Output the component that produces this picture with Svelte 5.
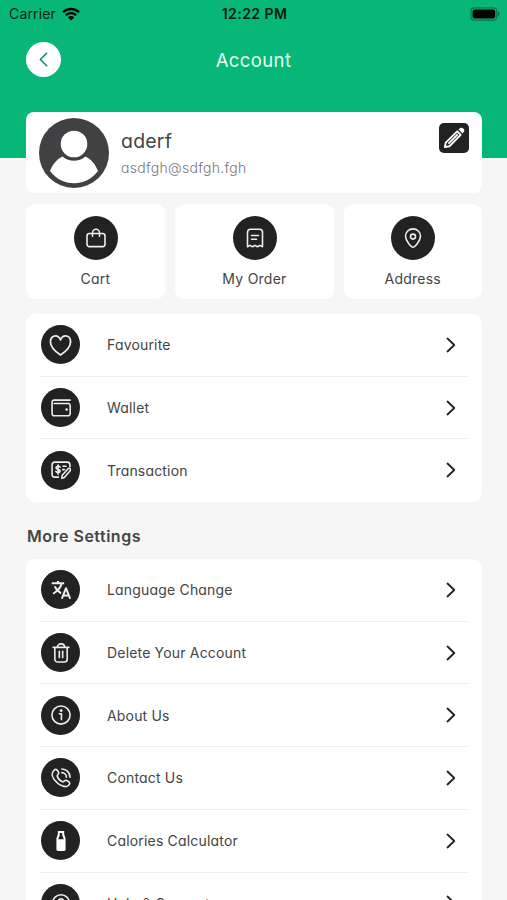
<script lang="ts">
	interface Item {
		icon: string;
		label: string;
	}

	const shortcuts: Item[] = [
		{ icon: 'bag', label: 'Cart' },
		{ icon: 'receipt', label: 'My Order' },
		{ icon: 'pin', label: 'Address' }
	];

	const general: Item[] = [
		{ icon: 'heart', label: 'Favourite' },
		{ icon: 'wallet', label: 'Wallet' },
		{ icon: 'transaction', label: 'Transaction' }
	];

	const settings: Item[] = [
		{ icon: 'language', label: 'Language Change' },
		{ icon: 'trash', label: 'Delete Your Account' },
		{ icon: 'info', label: 'About Us' },
		{ icon: 'phone', label: 'Contact Us' },
		{ icon: 'bottle', label: 'Calories Calculator' },
		{ icon: 'help', label: 'Help & Support' }
	];
</script>

{#snippet icon(name: string)}
	<svg class="icon {name}" viewBox="0 0 24 24">
		{#if name === 'bag'}
			<rect x="1.2" y="6.500" width="21.600" height="15.800" rx="2.800" />
			<path d="M7.800 10V5.700a4.200 4.200 0 0 1 8.400 0V10" />
		{:else if name === 'receipt'}
			<path d="M3 22.500V5a3.500 3.500 0 0 1 3.500-3.500h11A3.500 3.500 0 0 1 21 5v17.500l-3-1.700-3 1.700-3-1.700-3 1.700-3-1.700z" />
			<path d="M7.800 9h8.400M7.800 13.500h6" />
		{:else if name === 'pin'}
			<path d="M12 23c-2 0-9-7.500-9-13a9 9 0 0 1 18 0c0 5.500-7 13-9 13z" />
			<circle cx="12" cy="10.300" r="3" />
		{:else if name === 'heart'}
			<path d="M12 23C9 21 1 15.500 1 8.500 1 4.500 3.500 2 6.500 2 9 2 11 3.500 12 6.500 13 3.500 15 2 17.500 2 20.500 2 23 4.500 23 8.500 23 15.500 15 21 12 23z" />
		{:else if name === 'wallet'}
			<path d="M23 2.500H4A2.600 2.600 0 0 0 1.300 5.100v13.400A2.800 2.800 0 0 0 4 21.300h16.200a2.800 2.800 0 0 0 2.800-2.800V9.200a2.700 2.700 0 0 0-2.800-2.700H4" />
			<circle class="solid" cx="18.700" cy="13.800" r="1.500" />
		{:else if name === 'transaction'}
			<path d="M9 20.500H4.500a3.200 3.200 0 0 1-3.200-3.200V5.700a3.200 3.200 0 0 1 3.200-3.200h15a3.200 3.200 0 0 1 3.200 3.200v2.500" />
			<path d="M11 8.500c-1-1.500-5-1.500-5 .7 0 2.600 5 1.300 5 4 0 2.300-4.200 2.300-5.200.4M8.500 6v11M14.500 7.500h3.500M14 11.500h2" />
			<path d="M13 22l.5-3.800 7-7.700c2-1.500 4 .8 2.500 2.500l-7 8z" />
		{:else if name === 'language'}
			<path d="M.8 4h15M8.300 1.200V4M13 4C11.500 9.500 7.500 13.500 2.500 16.500M4.500 7.500c1.500 4 4.500 6.500 7.500 8.500" />
			<path d="M13 22.500l5-12.700 5 12.700M14.800 18.700h6.400" />
		{:else if name === 'trash'}
			<path d="M2.500 5.200h19M4.600 6v13.500a3.300 3.300 0 0 0 3.300 3.300h8.200a3.300 3.300 0 0 0 3.300-3.300V6M7.500 5.200c0-5.500 9-5.500 9 0M10 10v7.500M14 10v7.500" />
		{:else if name === 'info'}
			<circle cx="12" cy="12" r="10.900" />
			<path d="M10 10.500h2.500V17.500" />
			<circle class="solid" cx="12.200" cy="6.700" r="1.700" />
		{:else if name === 'phone'}
			<path d="M3 3.500c2.500-3.500 4.500-1.500 6 1.500 1.200 2.500-2 3-1.500 5 .8 2.500 3.500 5.500 6.300 6.500 2 .5 2.500-2.700 5-1.500 4 1.800 4.800 3.500 2 6-3.300 3-10 .3-14-4C2 12.500-.2 7 3 3.500z" />
			<path d="M13 1.200c5.500 0 9.800 4.300 9.800 9.800M13 5.500c3 0 5.500 2.500 5.500 5.500" />
		{:else if name === 'bottle'}
			<path class="solid" fill-rule="evenodd" d="M8.200 0h7.600v3.500L17.500 9v13.300a1.700 1.700 0 0 1-1.700 1.700H8.200a1.700 1.700 0 0 1-1.700-1.700V9l1.700-5.500zM10.500 2.500v2.500L8.700 10h6.600l-1.800-5V2.500z" />
		{:else if name === 'help'}
			<circle cx="12" cy="12" r="10" />
			<path d="M9 10c0-4 6-4 6 0 0 2-3 2-3 5M12 18v.5" />
		{/if}
	</svg>
{/snippet}

{#snippet list(items: Item[])}
	<ul class="list">
		{#each items as item (item.label)}
			<li class="row">
				<span class="badge">{@render icon(item.icon)}</span>
				<span class="label">{item.label}</span>
				<svg class="chevron" viewBox="0 0 10 16"><path d="M1.500 1.500 8.300 8l-6.800 6.500" /></svg>
			</li>
		{/each}
	</ul>
{/snippet}

<div class="screen">
	<header>
		<div class="status">
			<div class="carrier">
				<span>Carrier</span>
				<svg class="wifi" viewBox="0 0 18 14">
					<path d="M1 5.300a11.400 11.400 0 0 1 16 0M3.900 8.200a7.400 7.400 0 0 1 10.200 0" />
					<path class="dot" d="M9 13.600 5.800 10.400a4.600 4.600 0 0 1 6.400 0z" />
				</svg>
			</div>
			<span class="time">12:22 PM</span>
			<svg class="battery" viewBox="0 0 30 14">
				<rect class="shell" x="1" y=".8" width="25.800" height="12.400" rx="3.500" />
				<rect x="2.600" y="2.500" width="22.600" height="9" rx="2" />
				<path class="cap" d="M28 4.500q1.500.8 1.500 2.500T28 9.500z" />
			</svg>
		</div>
		<div class="nav">
			<button class="back" aria-label="Back">
				<svg viewBox="0 0 10 16"><path d="M8.500 1 1.500 8l7 7" /></svg>
			</button>
			<h1>Account</h1>
		</div>
	</header>

	<main>
		<section class="profile">
			<svg class="avatar" viewBox="0 0 70 70">
				<circle class="back-disc" cx="35" cy="35" r="35" />
				<circle class="figure" cx="35" cy="26" r="13.300" />
				<path class="figure" d="M23.500 38.500c7 5.800 16 5.800 23 0 6 3 10 8 12.500 14.500-6 8-15 12.300-24 12.300S17 61 11 53c2.500-6.500 6.500-11.500 12.500-14.500z" />
			</svg>
			<div class="who">
				<div class="name">aderf</div>
				<div class="email">asdfgh@sdfgh.fgh</div>
			</div>
			<button class="edit" aria-label="Edit profile">
				<svg viewBox="0 0 24 24">
					<path d="M2 22l1-5L15.500 4.700l3.800 3.800L7 21z" />
					<path d="M6.500 17.500 15.500 8.500" />
					<path class="solid" d="M17 2.800l1.500-1.500c2.500-2 6.200 1.700 4.200 4.200L21.200 7z" />
				</svg>
			</button>
		</section>

		<section class="shortcuts">
			{#each shortcuts as item (item.label)}
				<div class="tile">
					<span class="badge">{@render icon(item.icon)}</span>
					<span class="label">{item.label}</span>
				</div>
			{/each}
		</section>

		{@render list(general)}
		<h2>More Settings</h2>
		{@render list(settings)}
	</main>
</div>

<style>
	:global(body) {
		background: #f6f6f6;
	}

	.screen {
		height: 100vh;
		overflow: hidden;
		background: #f6f6f6;
		color: #444;
		font-family: Inter, 'Noto Sans', sans-serif;
		font-feature-settings: 'cv11';
	}

	svg {
		display: block;
		fill: none;
		stroke-linecap: round;
		stroke-linejoin: round;
	}

	button {
		border: 0;
		padding: 0;
		display: grid;
		place-items: center;
	}

	header {
		height: 158px;
		background: #06b777;
	}

	.status {
		display: grid;
		grid-template-columns: 1fr auto 1fr;
		align-items: center;
		height: 27px;
		padding: 0 7px 0 9px;
		color: #062118;
		font-size: 14px;
		font-feature-settings: normal;
	}

	.carrier {
		display: flex;
		align-items: center;
		gap: 6px;
		letter-spacing: 0.15px;
	}

	.wifi {
		width: 18px;
		height: 14px;
		stroke: #000;
		stroke-width: 2.3;
		stroke-linecap: butt;
	}

	.wifi .dot {
		fill: #000;
		stroke: none;
	}

	.time {
		color: #041a12;
		font-size: 14px;
		font-weight: 600;
		letter-spacing: 0.45px;
	}

	.battery {
		justify-self: end;
		width: 30px;
		height: 14px;
		fill: #000;
	}

	.battery .shell {
		fill: none;
		stroke: #04744c;
		stroke-width: 1.2;
	}

	.battery .cap {
		fill: #04744c;
	}

	.nav {
		display: grid;
		grid-template-columns: 35px 1fr 35px;
		align-items: center;
		padding: 15px 26px 0;
	}

	.back {
		width: 35px;
		height: 35px;
		border-radius: 50%;
		background: #fff;
	}

	.back svg {
		width: 9px;
		height: 15px;
		stroke: #178b60;
		stroke-width: 1.8;
	}

	h1 {
		margin: 1px 0 0;
		color: #e3fff4;
		font-size: 18.500px;
		font-weight: 400;
		letter-spacing: 0.4px;
		text-align: center;
	}

	main {
		margin-top: -46px;
		padding: 0 25.500px 0 26px;
	}

	.profile {
		display: flex;
		height: 81px;
		box-sizing: border-box;
		padding: 6px 13px 0 13px;
		border-radius: 8px;
		background: #fff;
	}

	.avatar {
		width: 70px;
		height: 70px;
	}

	.back-disc {
		fill: #414042;
	}

	.figure {
		fill: #fff;
	}

	.who {
		flex: 1;
		padding: 10px 0 0 12px;
	}

	.name {
		font-size: 19.500px;
		line-height: 26px;
		letter-spacing: 0.2px;
	}

	.email {
		margin-top: 4px;
		color: #777;
		font-size: 14px;
		font-weight: 300;
		line-height: 20px;
		letter-spacing: 0.3px;
	}

	.edit {
		width: 30px;
		height: 30px;
		margin-top: 5px;
		border-radius: 5px;
		background: #222;
	}

	.edit svg {
		width: 22px;
		height: 22px;
		stroke: #fff;
		stroke-width: 2;
	}

	.shortcuts {
		display: grid;
		grid-template-columns: 139px 1fr 137.500px;
		gap: 10px;
		margin: 11px 0 15px;
	}

	.tile {
		display: flex;
		flex-direction: column;
		align-items: center;
		height: 95px;
		box-sizing: border-box;
		padding-top: 11.500px;
		border-radius: 9px;
		background: #fff;
	}

	.tile .label {
		margin-top: 9px;
		line-height: 20px;
		letter-spacing: 0.25px;
	}

	.badge {
		display: grid;
		place-items: center;
		width: 39px;
		height: 39px;
		border-radius: 50%;
		background: #222;
	}

	.tile .badge {
		width: 44px;
		height: 44px;
	}

	.icon {
		width: 20px;
		height: 20px;
		stroke: #eee;
		stroke-width: 1.9;
	}

	.icon.heart {
		width: 23px;
		height: 22px;
	}

	.icon.language {
		stroke-width: 2.4;
		stroke-linecap: butt;
	}

	.icon .solid,
	.edit .solid {
		fill: #fff;
		stroke: none;
	}

	.label {
		font-size: 14px;
		letter-spacing: 0.18px;
	}

	.list {
		margin: 0;
		padding: 0 13px;
		border-radius: 9px;
		background: #fff;
		list-style: none;
	}

	.row {
		display: flex;
		align-items: center;
		height: 62.700px;
		box-sizing: border-box;
		padding: 0 13px 0 2px;
		border-bottom: 1px solid #f0f0f0;
	}

	.row:last-child {
		border-color: transparent;
	}

	.row .label {
		flex: 1;
		margin-left: 27px;
	}

	.chevron {
		width: 10px;
		height: 16px;
		stroke: #222;
		stroke-width: 1.8;
	}

	h2 {
		margin: 0;
		padding: 23px 0 11px 1px;
		font-size: 16px;
		font-weight: 600;
		line-height: 23px;
		letter-spacing: 0.5px;
	}
</style>
